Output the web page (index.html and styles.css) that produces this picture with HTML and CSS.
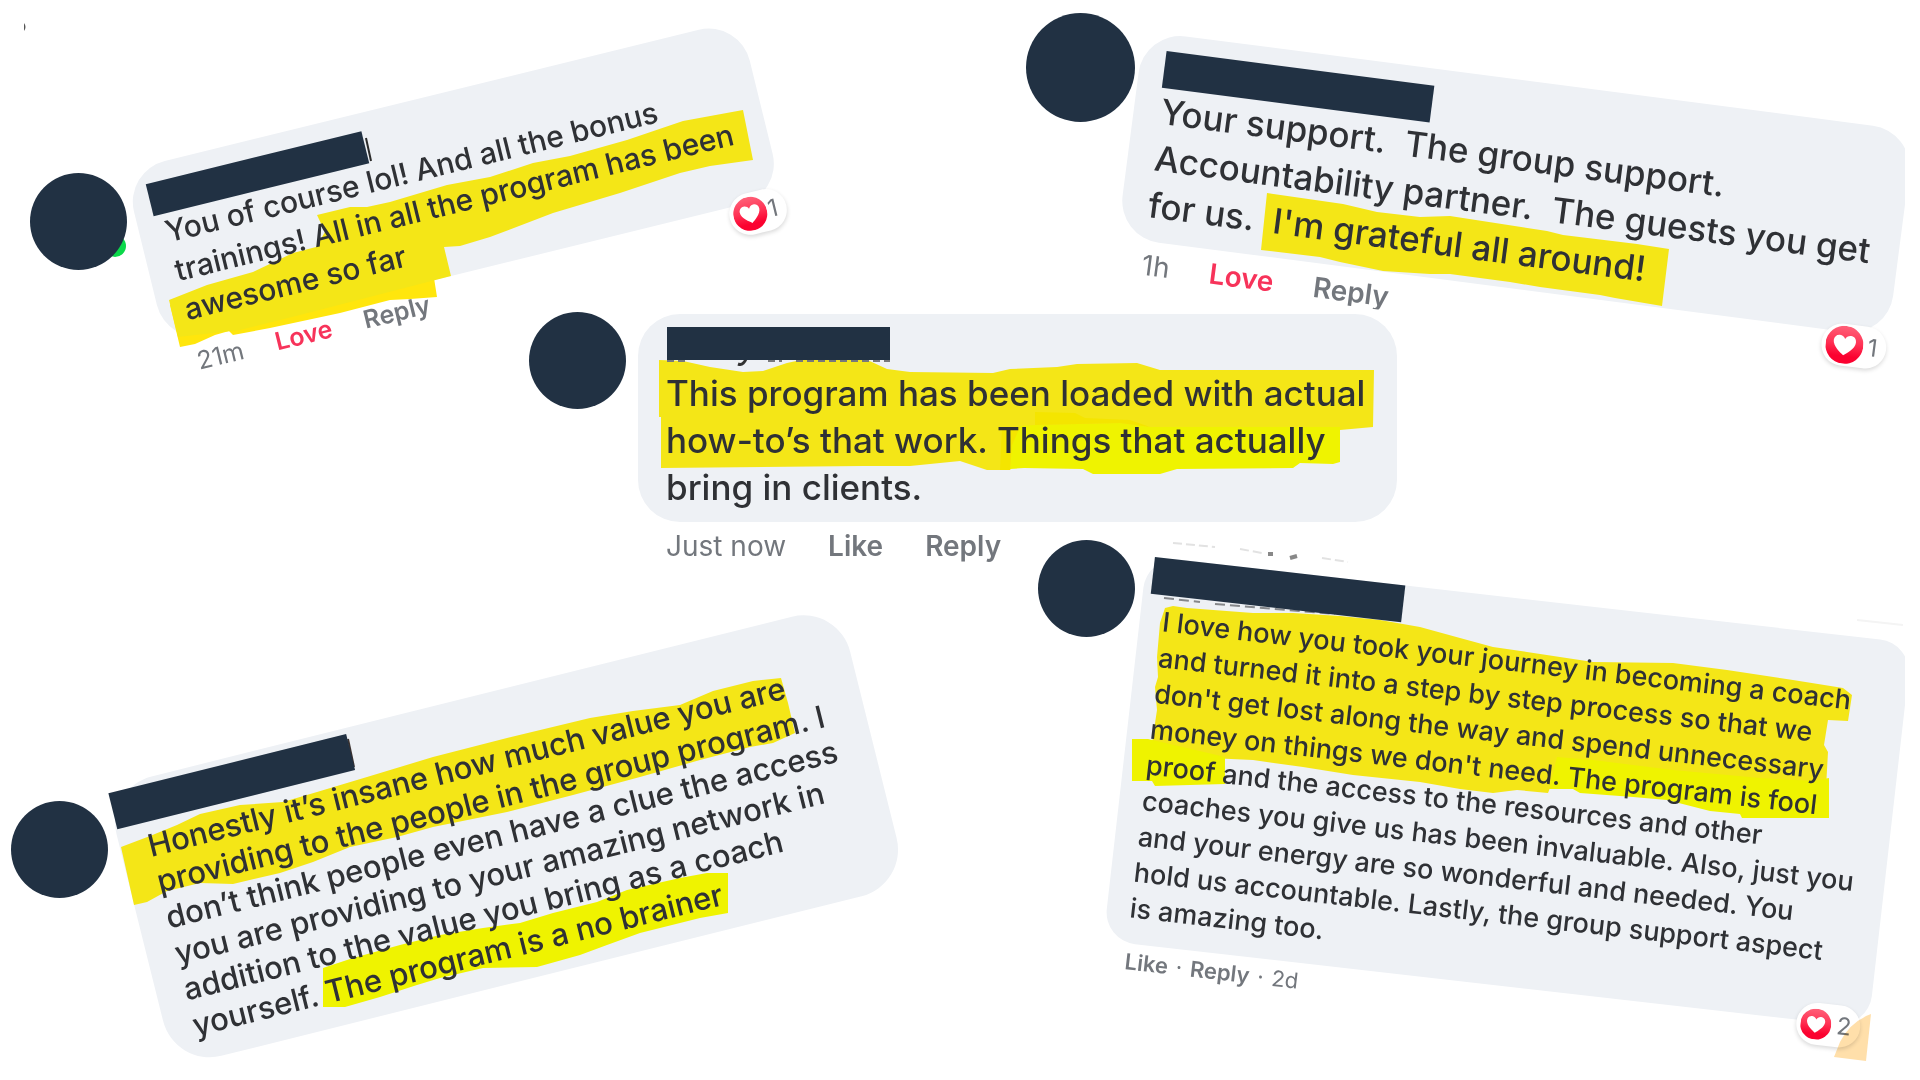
FILE: index.html
```html
<!DOCTYPE html>
<html lang="en">
<head>
<meta charset="utf-8">
<title>Program comments</title>
<link rel="stylesheet" href="styles.css">
</head>
<body>
<svg class="defs" aria-hidden="true">
  <defs>
    <linearGradient id="love" x1="0" y1="0" x2="0" y2="1">
      <stop offset="0" stop-color="#ff6078"/>
      <stop offset="0.45" stop-color="#ff3355"/>
      <stop offset="0.8" stop-color="#fb0230"/>
    </linearGradient>
    <symbol id="heart" viewBox="0 0 34 34">
      <circle cx="17" cy="17" r="17" fill="url(#love)"/>
      <path d="M17 26.500C14.500 24.500 7 19.500 7 13.800C7 10.600 9.200 8.500 12 8.500C14.200 8.500 16.200 9.800 17 11.800C17.800 9.800 19.800 8.500 22 8.500C24.800 8.500 27 10.600 27 13.800C27 19.500 19.500 24.500 17 26.500Z" fill="#fff"/>
    </symbol>
  </defs>
</svg>

<main class="board">
  <span class="online online-a"></span>
  <span class="avatar avatar-a"></span>
  <span class="avatar avatar-b"></span>
  <span class="avatar avatar-c"></span>
  <span class="avatar avatar-d"></span>
  <span class="avatar avatar-e"></span>

  <svg class="scraps" aria-hidden="true">
    <path d="M24 23Q27 27 24 31Z" fill="#555"/>
    <path d="M1173 543L1215 547M1240 549L1262 553M1322 558L1348 562" stroke="#e2e2e2" stroke-width="2" stroke-dasharray="9 4"/>
    <path d="M1268 554h5M1290 558l7 -2" stroke="#888" stroke-width="4"/>
    <path d="M1857 620L1903 625" stroke="#f4f4f4" stroke-width="2"/>
  </svg>

  <article class="note note-a">
    <div class="bubble">
      <svg class="marks" aria-hidden="true">
        <g transform="rotate(13.8) translate(-124 -171)">
          <path class="marker-warm" d="M180 347L170 305L300 285L434 278L437 297L410 299L390 300L340 313L270 328L233 335L229 331L215 335L195 344Z"/>
          <path class="marker" d="M317 215L350 207L367 207L390 202L447 185L490 177L533 163L570 156L627 140L683 121L743 110L753 160L710 166L680 173L620 193L553 213L490 237L460 246L444 247L451 276L300 315L240 330L178 337L169 300L207 285L253 272L293 253L316 247L325 232Z"/>
          <path d="M366 138L371 161" stroke="#2a2a2a" stroke-width="2"/>
        </g>
      </svg>
      <div class="name"></div>
      <p class="text">You of course lol! And all the bonus<br>trainings! All in all the program has been<br>awesome so far</p>
      <div class="reaction"><svg class="heart"><use href="#heart"/></svg><span>1</span></div>
    </div>
    <footer class="meta"><span>21m</span><button class="love" type="button">Love</button><button type="button">Reply</button></footer>
  </article>

  <article class="note note-b">
    <div class="bubble">
      <svg class="marks" aria-hidden="true">
        <g transform="rotate(-7.4) translate(-1144 -31)">
          <path class="marker" d="M1267 193L1343 204L1377 212L1420 217L1450 216L1547 231L1563 235L1637 244L1669 249L1662 306L1615 298L1600 295L1540 287L1510 282L1450 274L1430 274L1383 271L1340 262L1320 257L1261 250Z"/>
        </g>
      </svg>
      <div class="name"></div>
      <p class="text">Your support.&nbsp; The group support.<br>Accountability partner.&nbsp; The guests you get<br>for us.&nbsp; I'm grateful all around!</p>
      <div class="reaction"><svg class="heart"><use href="#heart"/></svg><span>1</span></div>
    </div>
    <footer class="meta"><span>1h</span><button class="love" type="button">Love</button><button type="button">Reply</button></footer>
  </article>

  <article class="note note-c">
    <div class="bubble">
      <svg class="marks" aria-hidden="true">
        <g transform="translate(-638 -314)">
          <path class="marker" d="M659 360L683 361L710 367L743 372L763 371L787 363L810 358L863 358L887 369L910 372L993 373L1010 369L1057 367L1077 364L1137 363L1160 370L1374 370L1373 427L1340 430L1036 430L1010 470L987 470L960 461L950 462L910 466L863 466L661 468L661 417L659 417Z"/>
          <path class="marker-bright" d="M1035 425L1077 424L1120 423L1150 427L1340 427L1340 462L1333 464L1300 463L1293 468L1177 469L1160 474L1093 474L1083 469L1024 468L1010 469L1012 440L1020 426Z"/>
          <path class="marker-overlap" d="M1035 412L1075 413L1085 418L1130 420L1150 427L1120 423L1035 425ZM1002 427L1020 427L1012 445L1010 470L1000 470Z"/>
          <path d="M667 361L685 361M768 361L782 361M796 361L890 361" stroke="#77797c" stroke-width="2" stroke-dasharray="7 4"/>
          <path d="M746 359Q743 366 738 364" stroke="#333" stroke-width="3" fill="none"/>
        </g>
      </svg>
      <div class="name"></div>
      <p class="text">This program has been loaded with actual<br>how-to’s that work. Things that actually<br>bring in clients.</p>
    </div>
    <footer class="meta"><span>Just now</span><button type="button">Like</button><button type="button">Reply</button></footer>
  </article>

  <article class="note note-d">
    <div class="bubble">
      <svg class="marks" aria-hidden="true">
        <g transform="rotate(14) translate(-105 -788)">
          <path class="marker" d="M121 847L150 836L177 825L200 814L240 805L283 802L317 792L367 777L433 757L507 738L590 718L633 711L680 705L713 691L753 681L781 678L788 703L795 733L773 743L750 747L700 760L640 777L573 795L507 812L433 827L397 837L350 847L313 862L280 873L233 884L200 883L167 891L147 902L134 905Z"/>
          <path class="marker-bright" d="M323 968L353 958L400 945L440 935L483 928L520 923L553 913L597 902L627 890L680 878L707 873L728 873L728 913L700 918L640 933L607 945L580 955L537 967L483 968L440 978L417 985L380 997L345 1007L323 1007Z"/>
          <path d="M348 739L354 767" stroke="#3a3230" stroke-width="2"/>
        </g>
      </svg>
      <div class="name"></div>
      <p class="text">Honestly it’s insane how much value you are<br>providing to the people in the group program. I<br>don’t think people even have a clue the access<br>you are providing to your amazing network in<br>addition to the value you bring as a coach<br>yourself. The program is a no brainer</p>
    </div>
  </article>

  <article class="note note-e">
    <div class="bubble">
      <svg class="marks" aria-hidden="true">
        <g transform="rotate(-6.5) translate(-1147 -556)">
          <path class="marker" d="M1165 608L1173 606L1187 608L1253 613L1293 613L1340 616L1380 620L1420 627L1460 638L1493 647L1527 652L1593 662L1673 663L1727 670L1793 680L1843 688L1852 695L1848 721L1828 720L1824 745L1828 752L1826 788L1555 775L1548 793L1517 790L1493 793L1460 789L1420 782L1353 775L1303 767L1253 760L1187 757L1163 747L1152 743L1157 710L1155 687L1158 677L1157 657L1160 623Z"/>
          <path class="marker-bright" d="M1557 757L1593 760L1673 770L1760 778L1813 781L1829 778L1829 818L1742 818L1740 814L1710 811L1667 800L1633 797L1580 793L1573 789L1549 789Z"/>
          <path class="marker-bright" d="M1132 739L1148 739L1187 748L1225 757L1225 784L1155 786L1152 781L1132 781Z"/>
          <path d="M1164 598L1200 602M1215 604L1335 614" stroke="#85878a" stroke-width="2" stroke-dasharray="10 5"/>
        </g>
      </svg>
      <div class="name"></div>
      <p class="text">I love how you took your journey in becoming a coach<br>and turned it into a step by step process so that we<br>don't get lost along the way and spend unnecessary<br>money on things we don't need. The program is fool<br>proof and the access to the resources and other<br>coaches you give us has been invaluable. Also, just you<br>and your energy are so wonderful and needed. You<br>hold us accountable. Lastly, the group support aspect<br>is amazing too.</p>
      <div class="reaction"><svg class="heart"><use href="#heart"/></svg><span>2</span></div>
    </div>
    <footer class="meta"><button type="button">Like</button><span>·</span><button type="button">Reply</button><span>·</span><span>2d</span></footer>
  </article>

  <svg class="scraps peach" aria-hidden="true">
    <path d="M1871 1014L1866 1061L1834 1057L1840 1042Q1850 1022 1871 1014Z" fill="#ffdfaa"/>
  </svg>
</main>
</body>
</html>
```
FILE: styles.css
```css
* { box-sizing: border-box; }

body {
  margin: 0;
  background: #fff;
  color: #2f3135;
  font-family: Inter, "Liberation Sans", sans-serif;
}

.defs { position: absolute; width: 0; height: 0; }

/* free canvas that the tilted comments are pinned on */
.board {
  position: relative;
  width: 100%;
  min-height: 100vh;
  overflow: hidden;
  clip-path: inset(0 15px 0 0);
}

.scraps {
  position: absolute;
  left: 0;
  top: 0;
  width: 100%;
  height: 100%;
  fill: none;
}

.peach { mix-blend-mode: multiply; pointer-events: none; }

.avatar {
  position: absolute;
  width: 97px;
  height: 97px;
  border-radius: 50%;
  background: #213143;
}
.avatar-a { left: 30px; top: 173px; }
.avatar-b { left: 1026px; top: 13px; width: 109px; height: 109px; }
.avatar-c { left: 529px; top: 312px; }
.avatar-d { left: 11px; top: 801px; }
.avatar-e { left: 1038px; top: 540px; }

.online {
  position: absolute;
  width: 22px;
  height: 22px;
  border-radius: 50%;
  background: #0bd84a;
}
.online-a { left: 104px; top: 235px; }

.note { position: absolute; transform-origin: 0 0; }
.note-a { left: 124px; top: 171px; width: 634px; transform: rotate(-13.8deg); }
.note-b { left: 1144px; top: 31px; width: 777px; transform: rotate(7.4deg); }
.note-c { left: 638px; top: 314px; width: 759px; }
.note-d { left: 105px; top: 788px; width: 756px; transform: rotate(-14deg); }
.note-e { left: 1147px; top: 556px; width: 770px; transform: rotate(6.5deg); }

.bubble {
  position: relative;
  border-radius: 42px;
  background: #eef1f5;
}
.note-a .bubble { padding: 18px 0 11px 26px; }
.note-b .bubble { padding: 17px 0 13px 27px; }
.note-c .bubble { padding: 13px 0 11px 28px; }
.note-d .bubble { padding: 6px 0 18px 28px; border-radius: 48px; }
.note-e .bubble { padding: 0 0 17px 23px; border-radius: 32px; }

/* highlighter strokes lie over the bubble and under the words */
.marks {
  position: absolute;
  left: 0;
  top: 0;
  width: 100%;
  height: 100%;
  overflow: visible;
}
.marker { fill: #f4e617; }
.marker-warm { fill: #ffe60d; }
.marker-bright { fill: #eff300; }
.marker-overlap { fill: #f4e500; }

.name { position: relative; height: 33px; background: #213143; }
.note-a .name { width: 222px; margin: 0 0 -2px -8px; }
.note-b .name { width: 270px; height: 37px; margin: 0 0 0 -2px; }
.note-c .name { width: 223px; margin: 0 0 10px 1px; }
.note-d .name { width: 245px; height: 37px; margin: 0 0 5px -26px; }
.note-e .name { width: 252px; height: 37px; margin: 0 0 9px -15px; }

.text {
  position: relative;
  margin: 0;
  font-size: 35px;
  font-weight: 500;
  line-height: 47px;
  white-space: nowrap;
}
.note-a .text { font-size: 30px; line-height: 40px; }
.note-d .text { font-size: 31px; line-height: 37px; }
.note-e .text { font-size: 27px; line-height: 36px; }

.meta {
  position: relative;
  display: flex;
  gap: 42px;
  margin-left: 28px;
  padding-top: 6px;
  color: #73777d;
  font-size: 28px;
  line-height: 36px;
  white-space: nowrap;
}
.meta button {
  padding: 0;
  border: 0;
  background: none;
  color: inherit;
  font: inherit;
  font-weight: 600;
}
.meta .love { color: #f7335a; }
.note-a .meta { gap: 33px; margin-left: 26px; font-size: 25px; line-height: 32px; }
.note-b .meta { gap: 40px; height: 38px; overflow: hidden; }
.note-e .meta { gap: 8px; margin-left: 24px; padding-top: 4px; font-size: 22px; line-height: 28px; }

.reaction {
  position: absolute;
  display: flex;
  align-items: center;
  justify-content: space-between;
  height: 42px;
  padding: 0 9px 0 4px;
  border-radius: 22px;
  background: #fff;
  box-shadow: 0 2px 4px rgba(0, 0, 0, 0.15);
  color: #73777d;
  font-size: 24px;
  line-height: 30px;
}
.note-a .reaction { right: -1px; bottom: -32px; width: 58px; }
.note-b .reaction { right: 0; bottom: -34px; width: 65px; }
.note-e .reaction { right: 8px; bottom: -23px; width: 64px; }

.heart { width: 34px; height: 34px; }
.note-b .heart { width: 38px; height: 38px; }
.note-e .heart { width: 31px; height: 31px; }
```
